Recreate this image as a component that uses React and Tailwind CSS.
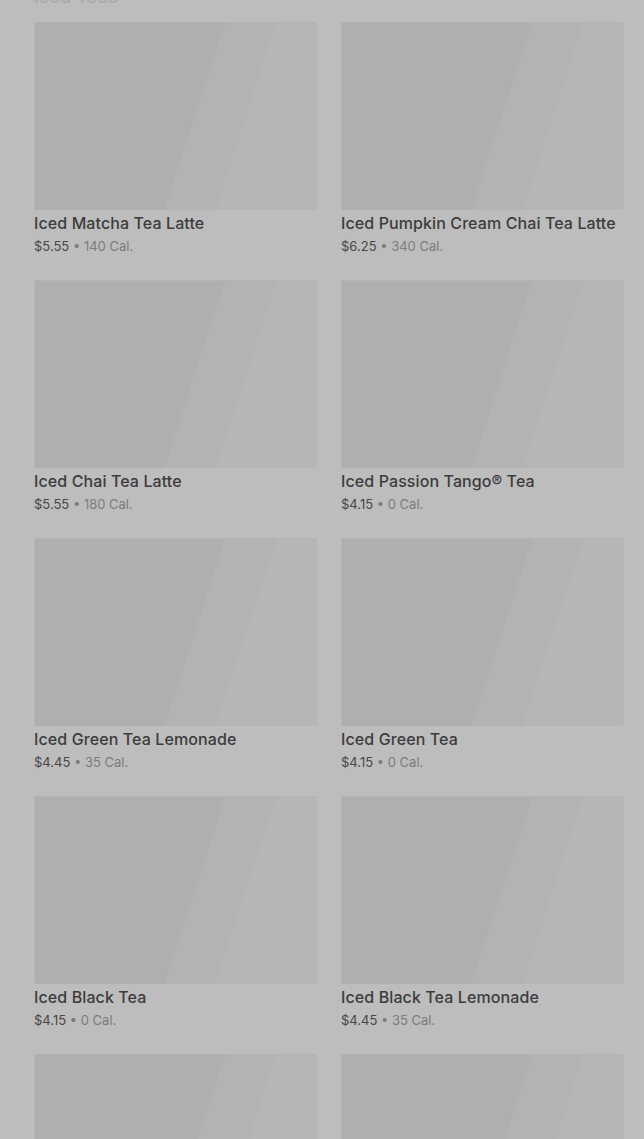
import React from 'react';

const drinks = [
    { name: "Iced Matcha Tea Latte", price: "$5.55", cal: "140 Cal." },
    { name: "Iced Pumpkin Cream Chai Tea Latte", price: "$6.25", cal: "340 Cal." },
    { name: "Iced Chai Tea Latte", price: "$5.55", cal: "180 Cal." },
    { name: "Iced Passion Tango® Tea", price: "$4.15", cal: "0 Cal." },
    { name: "Iced Green Tea Lemonade", price: "$4.45", cal: "35 Cal." },
    { name: "Iced Green Tea", price: "$4.15", cal: "0 Cal." },
    { name: "Iced Black Tea", price: "$4.15", cal: "0 Cal." },
    { name: "Iced Black Tea Lemonade", price: "$4.45", cal: "35 Cal." },
    { name: "Iced Peach Green Tea", price: "$4.45", cal: "60 Cal." },
    { name: "Iced Peach Green Tea Lemonade", price: "$4.75", cal: "90 Cal." },
];

const Placeholder = () => (
    <div className="h-[188px] w-full rounded-[2px] border-t border-l border-[#b4b4b4] bg-[linear-gradient(108deg,#afafaf_0%,#afafaf_55%,#b3b3b3_56%,#b3b3b3_70%,#b6b6b6_71%,#b6b6b6_100%)]" />
);

const App = () => {
    return (
        <div className="w-full min-h-screen h-[1139px] overflow-hidden bg-[#bdbdbd] font-['Inter',sans-serif]">
            <div className="pl-[34px] pr-[20px]">
                <h2 className="-mt-[15px] h-[21px] text-[18px] leading-6 font-semibold text-[#acacac]">Iced Teas</h2>
                <div className="mt-[16px] grid grid-cols-2 gap-x-6 gap-y-6">
                    {drinks.map((d) => (
                        <div key={d.name}>
                            <Placeholder />
                            <div className="mt-[1px] text-[16px] leading-6 font-medium text-[#3c3c3c] tracking-[0.1px] whitespace-nowrap">{d.name}</div>
                            <div className="mt-[1px] text-[13px] leading-5 text-[#474747]">
                                {d.price}
                                <span className="text-[#7c7c7c]"> • {d.cal}</span>
                            </div>
                        </div>
                    ))}
                </div>
            </div>
        </div>
    );
};

export default App;
